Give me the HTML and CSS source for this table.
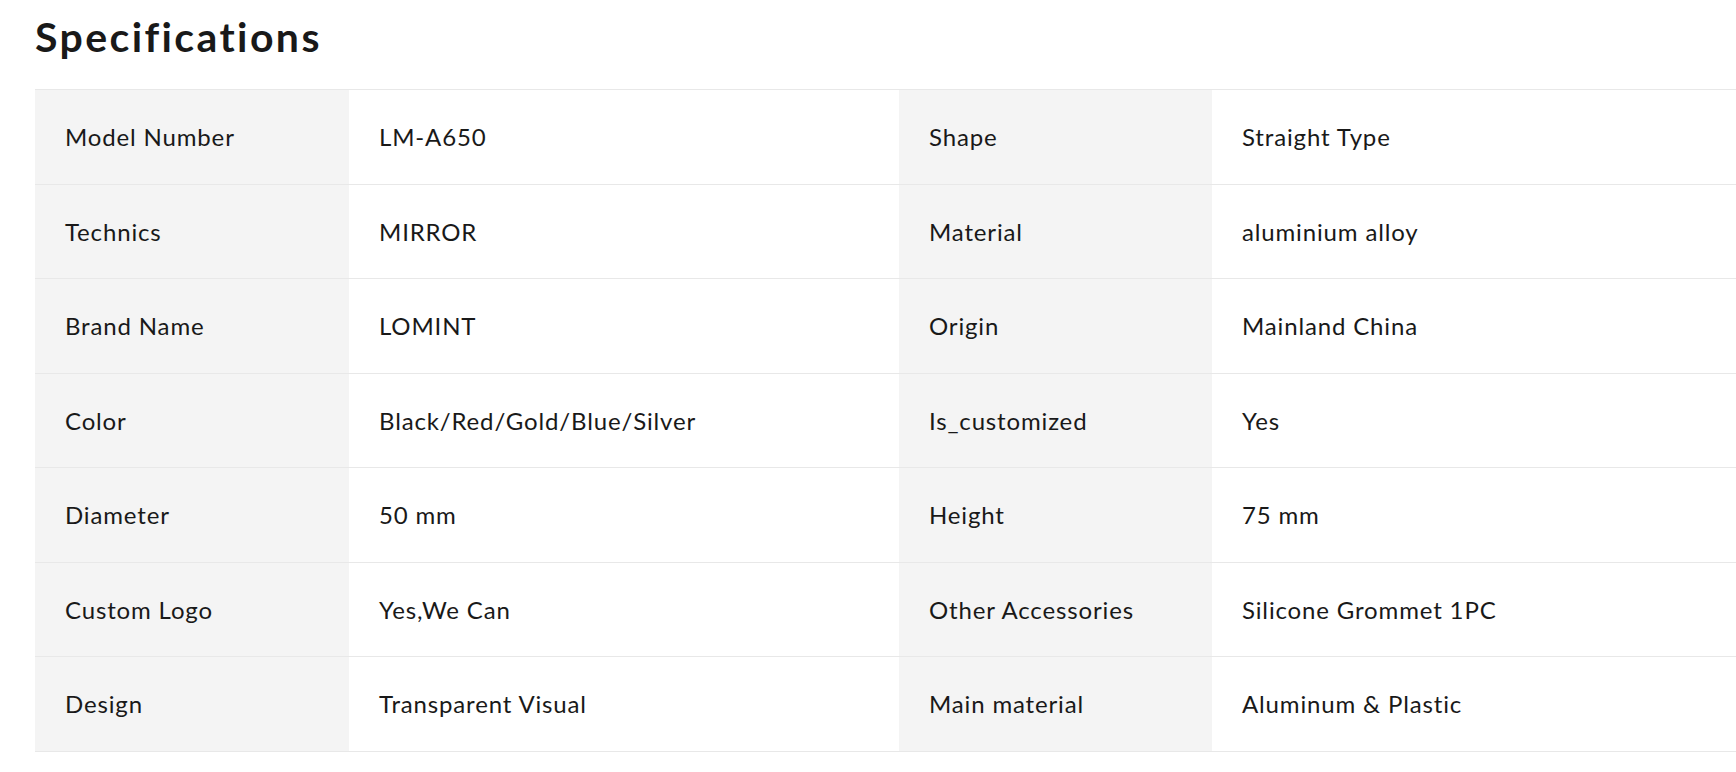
FILE: index.html
```html
<!DOCTYPE html>
<html lang="en">
<head>
<meta charset="utf-8">
<title>Specifications</title>
<link rel="stylesheet" href="styles.css">
</head>
<body>
<section class="specs">
  <h2 class="specs-title">Specifications</h2>
  <div class="specs-table">
    <div class="row"><div class="cell label">Model Number</div><div class="cell value">LM-A650</div><div class="cell label">Shape</div><div class="cell value">Straight Type</div></div>
    <div class="row"><div class="cell label">Technics</div><div class="cell value">MIRROR</div><div class="cell label">Material</div><div class="cell value">aluminium alloy</div></div>
    <div class="row"><div class="cell label">Brand Name</div><div class="cell value">LOMINT</div><div class="cell label">Origin</div><div class="cell value">Mainland China</div></div>
    <div class="row"><div class="cell label">Color</div><div class="cell value">Black/Red/Gold/Blue/Silver</div><div class="cell label">Is_customized</div><div class="cell value">Yes</div></div>
    <div class="row"><div class="cell label">Diameter</div><div class="cell value">50 mm</div><div class="cell label">Height</div><div class="cell value">75 mm</div></div>
    <div class="row"><div class="cell label">Custom Logo</div><div class="cell value">Yes,We Can</div><div class="cell label">Other Accessories</div><div class="cell value">Silicone Grommet 1PC</div></div>
    <div class="row"><div class="cell label">Design</div><div class="cell value">Transparent Visual</div><div class="cell label">Main material</div><div class="cell value">Aluminum &amp; Plastic</div></div>
  </div>
</section>
</body>
</html>
```
FILE: styles.css
```css
html, body {
  margin: 0;
  padding: 0;
  background: #ffffff;
  overflow: hidden;
}
body {
  font-family: "Lato", "Liberation Sans", sans-serif;
  color: #191919;
}
.specs {
  padding: 0 0 0 35px;
}
.specs-title {
  margin: 0;
  padding-top: 14px;
  height: 89px;
  box-sizing: border-box;
  font-size: 41px;
  line-height: 46px;
  font-weight: 700;
  letter-spacing: 2.4px;
}
.specs-table {
  border-top: 1px solid #e8e8e8;
}
.row {
  display: grid;
  grid-template-columns: 314px 550px 313px 1fr;
  height: 94.5px;
  box-sizing: border-box;
  border-bottom: 1px solid #e8e8e8;
}
.cell {
  display: flex;
  align-items: center;
  padding: 0 30px;
  font-size: 24px;
  letter-spacing: 0.85px;
}
.label {
  background: #f4f4f4;
}
.value {
  background: #ffffff;
}
```
